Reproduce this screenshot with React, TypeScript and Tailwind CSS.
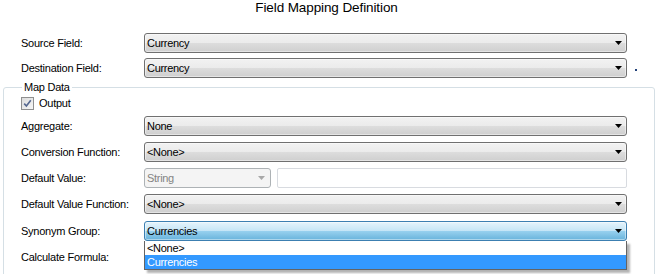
import React from "react";

const Arrow = ({ color = "#000" }: { color?: string }) => (
  <svg width="8" height="5" viewBox="0 0 8 5" className="block">
    <polygon points="0,0 7,0 3.5,4" fill={color} />
  </svg>
);

const Combo = ({ value, variant = "normal" }: { value: string; variant?: "normal" | "blue" }) => {
  const cls =
    variant === "blue"
      ? "border-[#3c7fb1] bg-[linear-gradient(to_bottom,#e5f4fc_0%,#c4e5f6_50%,#98d1ef_50%,#68b3db_100%)]"
      : "border-[#707070] bg-[linear-gradient(to_bottom,#f2f2f2_0%,#ebebeb_50%,#dddddd_50%,#cfcfcf_100%)]";
  return (
    <div className={`w-[483px] h-[20px] rounded-[3px] border ${cls} flex items-center justify-between pl-[2px] pr-[3px] shadow-[inset_0_0_0_1px_rgba(255,255,255,0.45)]`}>
      <span className="tracking-[-0.3px]">{value}</span>
      <Arrow />
    </div>
  );
};

const Label = ({ children }: { children: React.ReactNode }) => (
  <div className="w-[123px] shrink-0 tracking-[-0.25px]">{children}</div>
);

export default function App() {
  return (
    <div className="w-[657px] h-[274px] overflow-hidden bg-white font-['Liberation_Sans',Arial,sans-serif] text-[11px] leading-[13px] text-black">
      <h1 className="text-center text-[13.5px] leading-[16px] tracking-[-0.1px] pr-[4px]">Field Mapping Definition</h1>

      <div className="mt-[17px] flex flex-col gap-[5px] pl-[21px]">
        <div className="flex items-center">
          <Label>Source Field:</Label>
          <Combo value="Currency" />
        </div>
        <div className="flex items-center">
          <Label>Destination Field:</Label>
          <Combo value="Currency" />
          <span className="ml-[8px] mt-[3px] w-[2px] h-[2px] bg-[#23427a]" />
        </div>
      </div>

      <fieldset className="mt-[2px] ml-[3px] mr-[2px] border border-[#d5dfe5] rounded-[3px] pl-[17px] pb-[20px]">
        <legend className="ml-[1px] px-[2px] leading-[14px] tracking-[-0.25px]">Map Data</legend>

        <div className="mt-[3px] flex items-center h-[13px]">
          <div className="w-[13px] h-[13px] border border-[#8f8f8f] bg-[linear-gradient(135deg,#dcdcdc,#f6f6f6)] flex items-center justify-center">
            <svg width="9" height="9" viewBox="0 0 9 9">
              <path d="M1.2 4.6 L3.4 7 L7.8 1.2" stroke="#55678f" strokeWidth="1.6" fill="none" />
            </svg>
          </div>
          <span className="ml-[5px] tracking-[-0.25px]">Output</span>
        </div>

        <div className="mt-[6px] flex items-center">
          <Label>Aggregate:</Label>
          <Combo value="None" />
        </div>

        <div className="mt-[6px] flex items-center">
          <Label>Conversion Function:</Label>
          <Combo value="<None>" />
        </div>

        <div className="mt-[6px] flex items-center">
          <Label>Default Value:</Label>
          <div className="w-[127px] h-[20px] rounded-[3px] border border-[#adb2b5] bg-[#f4f4f4] flex items-center justify-between pl-[2px] pr-[4px] text-[#838383]">
            <span className="tracking-[-0.3px]">String</span>
            <Arrow color="#a8a8a8" />
          </div>
          <div className="ml-[6px] w-[350px] h-[20px] rounded-[2px] border border-[#d8dbe0] bg-white" />
        </div>

        <div className="mt-[6px] flex items-center">
          <Label>Default Value Function:</Label>
          <Combo value="<None>" />
        </div>

        <div className="mt-[7px] flex items-center">
          <Label>Synonym Group:</Label>
          <div className="relative">
            <Combo value="Currencies" variant="blue" />
            <div className="absolute left-0 top-full z-10 w-[483px] border border-t-0 border-[#646464] bg-white shadow-[3px_3px_2px_rgba(0,0,0,0.3)]">
              <div className="h-[14px] leading-[14px] pl-[2px] tracking-[-0.3px]">&lt;None&gt;</div>
              <div className="h-[14px] leading-[14px] pl-[2px] bg-[#3399ff] text-white tracking-[-0.3px]">Currencies</div>
            </div>
          </div>
        </div>

        <div className="mt-[6px] flex items-center h-[20px]">
          <Label>Calculate Formula:</Label>
        </div>
      </fieldset>
    </div>
  );
}
